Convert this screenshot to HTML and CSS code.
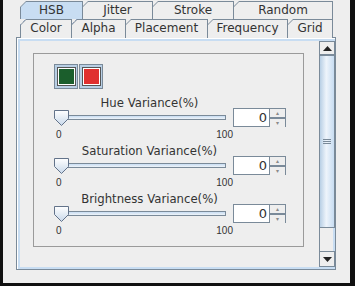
FILE: index.html
```html
<!DOCTYPE html>
<html lang="en">
<head>
  <meta charset="UTF-8">
  <title>HSB variance</title>
  <link rel="stylesheet" href="styles.css">
</head>
<body>
  <div class="window">
    <div class="tabpane">
      <div class="tab-row row-top">
        <div class="tab selected t-hsb"><span>HSB</span></div>
        <div class="tab t-jitter"><span>Jitter</span></div>
        <div class="tab t-stroke"><span>Stroke</span></div>
        <div class="tab t-random"><span>Random</span></div>
      </div>
      <div class="tab-row row-bottom">
        <div class="tab t-color dog"><span>Color</span></div>
        <div class="tab t-alpha dog"><span>Alpha</span></div>
        <div class="tab t-placement"><span>Placement</span></div>
        <div class="tab t-frequency"><span>Frequency</span></div>
        <div class="tab t-grid"><span>Grid</span></div>
      </div>

      <div class="tab-content">
        <div class="scroll">
          <div class="viewport">
            <div class="group">
              <div class="swatches">
                <div class="swatch-btn"><div class="swatch green"></div></div>
                <div class="swatch-btn"><div class="swatch red"></div></div>
              </div>

              <div class="var-row">
                <div class="var-slider">
                  <div class="var-title">Hue Variance(%)</div>
                  <div class="slider">
                    <div class="track"></div>
                    <svg class="thumb" width="15" height="16" viewBox="0 0 15 16">
                      <defs>
                        <linearGradient id="tg" x1="0" y1="0" x2="0" y2="1">
                          <stop offset="0" stop-color="#ffffff"/>
                          <stop offset="1" stop-color="#c8d8ea"/>
                        </linearGradient>
                      </defs>
                      <path d="M0.5 0.5 H14.5 V8.5 L7.5 15.5 L0.5 8.5 Z" fill="url(#tg)" stroke="#63738a"/>
                    </svg>
                  </div>
                  <div class="ticks"><span>0</span><span>100</span></div>
                </div>
                <div class="spinner">
                  <div class="spin-field">0</div>
                  <div class="spin-btns">
                    <div class="spin-btn up">&#9652;</div>
                    <div class="spin-btn down">&#9662;</div>
                  </div>
                </div>
              </div>

              <div class="var-row">
                <div class="var-slider">
                  <div class="var-title">Saturation Variance(%)</div>
                  <div class="slider">
                    <div class="track"></div>
                    <svg class="thumb" width="15" height="16" viewBox="0 0 15 16">
                      <path d="M0.5 0.5 H14.5 V8.5 L7.5 15.5 L0.5 8.5 Z" fill="url(#tg)" stroke="#63738a"/>
                    </svg>
                  </div>
                  <div class="ticks"><span>0</span><span>100</span></div>
                </div>
                <div class="spinner">
                  <div class="spin-field">0</div>
                  <div class="spin-btns">
                    <div class="spin-btn up">&#9652;</div>
                    <div class="spin-btn down">&#9662;</div>
                  </div>
                </div>
              </div>

              <div class="var-row">
                <div class="var-slider">
                  <div class="var-title">Brightness Variance(%)</div>
                  <div class="slider">
                    <div class="track"></div>
                    <svg class="thumb" width="15" height="16" viewBox="0 0 15 16">
                      <path d="M0.5 0.5 H14.5 V8.5 L7.5 15.5 L0.5 8.5 Z" fill="url(#tg)" stroke="#63738a"/>
                    </svg>
                  </div>
                  <div class="ticks"><span>0</span><span>100</span></div>
                </div>
                <div class="spinner">
                  <div class="spin-field">0</div>
                  <div class="spin-btns">
                    <div class="spin-btn up">&#9652;</div>
                    <div class="spin-btn down">&#9662;</div>
                  </div>
                </div>
              </div>
            </div>
          </div>

          <div class="scrollbar">
            <div class="sb-btn"><svg width="9" height="5" viewBox="0 0 9 5"><path d="M4.5 0 L9 5 H0 Z" fill="#222"/></svg></div>
            <div class="sb-track">
              <div class="sb-thumb"><div class="grip"></div></div>
            </div>
            <div class="sb-btn sb-down"><svg width="9" height="5" viewBox="0 0 9 5"><path d="M0 0 H9 L4.5 5 Z" fill="#222"/></svg></div>
          </div>
        </div>
      </div>
    </div>
  </div>
</body>
</html>
```

FILE: styles.css
```css
body{
  margin: 0;
  background-color: #101010;
  font-family: "DejaVu Sans", sans-serif;
  color: #333333;
}
.window{
  width: 347px;
  height: 283px;
  margin-left: 3px;
  background-color: #eeeeee;
  overflow: hidden;
}
.tabpane{
  margin-left: 13px;
  width: 320px;
  padding-top: 1px;
}

/* tabs */
.tab-row{
  display: flex;
  height: 18px;
  padding-left: 4px;
}
.tab{
  position: relative;
  box-sizing: border-box;
  height: 18px;
  padding: 1px 1px 0 1px;
  margin-right: -1px;
  background-color: #7a8a99;
  clip-path: polygon(6px 0, 100% 0, 100% 100%, 0 100%, 0 6px);
  font-size: 12px;
}
.tab span{
  display: block;
  height: 100%;
  background-color: #eeeeee;
  clip-path: polygon(5px 0, 100% 0, 100% 100%, 0 100%, 0 5px);
  text-align: center;
  line-height: 17px;
}
.tab.selected span{
  background-color: #c8ddf2;
}
.row-bottom .tab{
  height: 19px;
}
.tab.dog::before{
  content: "";
  position: absolute;
  left: 0;
  top: 0;
  width: 6px;
  height: 6px;
  background: linear-gradient(135deg, #6a80a8 50%, transparent 50%);
}
.t-hsb{ width: 63px; }
.t-jitter{ width: 71px; }
.t-stroke{ width: 82px; }
.t-random{ width: 100px; }
.t-color{ width: 52px; }
.t-alpha{ width: 55px; }
.t-placement{ width: 83px; }
.t-frequency{ width: 81px; }
.t-grid{ width: 46px; }

/* content */
.tab-content{
  box-sizing: border-box;
  height: 233px;
  border: 1px solid #7a8a99;
  padding: 3px 0 2px 3px;
  box-shadow: inset 1px 1px 0 #ffffff, inset 3px 3px 0 #c8ddf2, inset -2px -2px 0 #c8ddf2;
}
.scroll{
  display: flex;
  height: 100%;
}
.viewport{
  flex: 1;
  padding: 12px 15px 0 13px;
}
.group{
  height: 194px;
  box-sizing: border-box;
  border: 1px solid #9a9a9a;
  padding: 10px 0 0 20px;
}
.swatches{
  display: flex;
  gap: 1px;
}
.swatch-btn{
  box-sizing: border-box;
  width: 24px;
  height: 25px;
  border: 1px solid #7a8a99;
  background-color: #b8cfe5;
  display: flex;
  align-items: center;
  justify-content: center;
}
.swatch{
  width: 15px;
  height: 15px;
  border: 1px solid #ffffff;
  outline: 1px solid #555555;
}
.swatch.green{ background-color: #1b5e2c; }
.swatch.red{ background-color: #e0302f; }

/* variance rows */
.var-row{
  display: flex;
  align-items: flex-start;
  margin-top: 5px;
  height: 43px;
}
.var-slider{
  width: 179px;
}
.var-title{
  box-sizing: border-box;
  font-size: 11.7px;
  text-align: center;
  padding: 2px 0 0 12px;
  height: 16px;
  line-height: 14px;
}
.slider{
  position: relative;
  height: 17px;
}
.track{
  position: absolute;
  left: 2px;
  right: 7px;
  top: 5px;
  height: 5px;
  box-sizing: border-box;
  border: 1px solid #7a8a99;
  background: linear-gradient(#c8ddf2, #eef3f9);
}
.thumb{
  position: absolute;
  left: 0;
  top: 0;
}
.ticks{
  display: flex;
  justify-content: space-between;
  font-family: "Liberation Sans", sans-serif;
  font-size: 10px;
  color: #333333;
  margin-top: 3px;
  padding-left: 2px;
  line-height: 10px;
}
.spinner{
  display: flex;
  margin-top: 14px;
  height: 19px;
  box-sizing: border-box;
  border: 1px solid #7a8a99;
}
.spin-field{
  width: 33px;
  background-color: #ffffff;
  font-size: 13px;
  text-align: right;
  padding-right: 2px;
  line-height: 17px;
}
.spin-btns{
  width: 15px;
  display: flex;
  flex-direction: column;
  border-left: 1px solid #7a8a99;
}
.spin-btn{
  flex: 1;
  font-size: 6px;
  color: #8a8a8a;
  text-align: center;
  line-height: 8px;
  background-color: #eeeeee;
}
.spin-btn.up{
  border-bottom: 2px solid #7a8a99;
}

/* scrollbar */
.scrollbar{
  width: 16px;
  display: flex;
  flex-direction: column;
  border-left: 1px solid #7a8a99;
  box-sizing: border-box;
}
.sb-btn{
  height: 14px;
  box-sizing: border-box;
  border: 1px solid #7a8a99;
  border-left: none;
  background-color: #eeeeee;
  display: flex;
  align-items: center;
  justify-content: center;
}
.sb-down{
  height: 16px;
}
.sb-track{
  flex: 1;
  padding-bottom: 23px;
}
.sb-thumb{
  height: 100%;
  box-sizing: border-box;
  border: 1px solid #7a8a99;
  border-left: none;
  background: linear-gradient(90deg, #b8cfe5, #eef4fb 45%, #c8ddf2);
  display: flex;
  align-items: center;
  justify-content: center;
}
.grip{
  width: 8px;
  height: 5px;
  background: repeating-linear-gradient(#7a8a99 0 1px, transparent 1px 2px);
}
```
